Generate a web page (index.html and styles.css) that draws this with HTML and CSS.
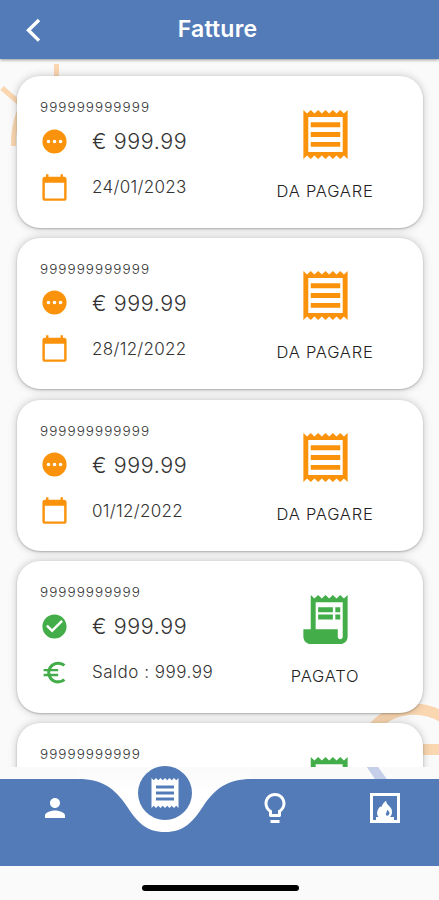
FILE: index.html
```
<!DOCTYPE html>
<html lang="it">
<head>
<meta charset="utf-8">
<title>Fatture</title>
<link rel="stylesheet" href="styles.css">
</head>
<body>
<svg class="defs" width="0" height="0" aria-hidden="true">
  <symbol id="receipt-outline" viewBox="0 0 24 24"><path d="M19.5 3.5L18 2l-1.5 1.5L15 2l-1.5 1.5L12 2l-1.5 1.5L9 2 7.5 3.5 6 2 4.5 3.5 3 2v20l1.5-1.5L6 22l1.5-1.5L9 22l1.5-1.5L12 22l1.5-1.5L15 22l1.5-1.5L18 22l1.5-1.5L21 22V2l-1.5 1.5zM19 19.09H5V4.91h14v14.18zM6 15h12v2H6zm0-4h12v2H6zm0-4h12v2H6z"/></symbol>
  <symbol id="receipt-long" viewBox="0 0 24 24"><path d="M19.5 3.5L18 2l-1.5 1.5L15 2l-1.5 1.5L12 2l-1.5 1.5L9 2 7.5 3.5 6 2v14H3v3c0 1.66 1.34 3 3 3h12c1.66 0 3-1.34 3-3V2l-1.5 1.5zM19 19c0 .55-.45 1-1 1s-1-.45-1-1v-3H8V5h11v14zM9 7h6v2H9zM16 7h2v2h-2zM9 10h6v2H9zM16 10h2v2h-2z"/></symbol>
  <symbol id="pending" viewBox="0 0 24 24"><path fill-rule="evenodd" d="M12 2a10 10 0 1 0 0 20 10 10 0 0 0 0-20zM7 13.5a1.5 1.5 0 1 1 0-3 1.5 1.5 0 0 1 0 3zm5 0a1.5 1.5 0 1 1 0-3 1.5 1.5 0 0 1 0 3zm5 0a1.5 1.5 0 1 1 0-3 1.5 1.5 0 0 1 0 3z"/></symbol>
  <symbol id="calendar" viewBox="0 0 24 24"><path d="M20 3h-1V1h-2v2H7V1H5v2H4c-1.1 0-2 .9-2 2v16c0 1.1.9 2 2 2h16c1.1 0 2-.9 2-2V5c0-1.1-.9-2-2-2zm0 18H4V8h16v13z"/></symbol>
  <symbol id="check" viewBox="0 0 24 24"><path d="M12 2C6.48 2 2 6.48 2 12s4.48 10 10 10 10-4.48 10-10S17.52 2 12 2zm-2 15l-5-5 1.41-1.41L10 14.17l7.59-7.59L19 8l-9 9z"/></symbol>
  <symbol id="euro" viewBox="0 0 24 24"><path d="M15 18.5c-2.51 0-4.68-1.42-5.76-3.5H15v-2H8.58c-.05-.33-.08-.66-.08-1s.03-.67.08-1H15V9H9.24C10.32 6.92 12.5 5.5 15 5.5c1.61 0 3.09.59 4.23 1.57L21 5.3C19.41 3.87 17.3 3 15 3c-3.92 0-7.24 2.51-8.48 6H3v2h3.06c-.04.33-.06.66-.06 1s.02.67.06 1H3v2h3.52c1.24 3.49 4.56 6 8.48 6 2.31 0 4.41-.87 6-2.3l-1.78-1.77c-1.13.98-2.6 1.57-4.22 1.57z"/></symbol>
</svg>

<div class="screen">
  <svg class="backdrop" viewBox="0 0 439 900" aria-hidden="true">
    <g fill="none" stroke="#fad7b0" stroke-width="5">
      <path d="M56.500 64V90M2 88L24 107M19 112Q13 128 13.500 146"/>
      <path stroke-width="11" d="M374 727A54 54 0 0 1 454 727M410 749.500H439"/>
    </g>
    <path fill="#c6cfea" d="M362 760H373L389 782H377z"/>
  </svg>

  <header class="bar">
    <svg class="back" viewBox="0 0 16 26"><path d="M14 3L3.500 13.300L14 23.600" fill="none" stroke="#fff" stroke-width="3.400"/></svg>
    <h1>Fatture</h1>
  </header>

  <main class="list">
    <article class="card due">
      <div class="info"><p class="code">999999999999</p>
        <p class="row"><svg><use href="#pending"/></svg><span class="amount">€ 999.99</span></p>
        <p class="row"><svg><use href="#calendar"/></svg><span class="detail">24/01/2023</span></p></div>
      <div class="status"><svg><use href="#receipt-outline"/></svg><span class="label">DA PAGARE</span></div>
    </article>
    <article class="card due">
      <div class="info"><p class="code">999999999999</p>
        <p class="row"><svg><use href="#pending"/></svg><span class="amount">€ 999.99</span></p>
        <p class="row"><svg><use href="#calendar"/></svg><span class="detail">28/12/2022</span></p></div>
      <div class="status"><svg><use href="#receipt-outline"/></svg><span class="label">DA PAGARE</span></div>
    </article>
    <article class="card due">
      <div class="info"><p class="code">999999999999</p>
        <p class="row"><svg><use href="#pending"/></svg><span class="amount">€ 999.99</span></p>
        <p class="row"><svg><use href="#calendar"/></svg><span class="detail">01/12/2022</span></p></div>
      <div class="status"><svg><use href="#receipt-outline"/></svg><span class="label">DA PAGARE</span></div>
    </article>
    <article class="card paid">
      <div class="info"><p class="code">99999999999</p>
        <p class="row"><svg><use href="#check"/></svg><span class="amount">€ 999.99</span></p>
        <p class="row"><svg><use href="#euro"/></svg><span class="detail saldo">Saldo : 999.99</span></p></div>
      <div class="status"><svg><use href="#receipt-long"/></svg><span class="label">PAGATO</span></div>
    </article>
    <article class="card paid">
      <div class="info"><p class="code">99999999999</p></div>
      <div class="status"><svg><use href="#receipt-long"/></svg></div>
    </article>
  </main>

  <nav class="tabs">
    <svg class="shape" viewBox="0 0 439 99" aria-hidden="true">
      <linearGradient id="fade" x2="0" y2="1"><stop offset="0" stop-color="#fafafa"/><stop offset=".4" stop-color="#fff"/></linearGradient>
      <path fill="url(#fade)" d="M78 0H252V66H78z"/>
      <path fill="#527bb8" d="M0 12H78C103 12 115 22 126 38C137 55 146 65 165 65C184 65 193 55 204 38C215 22 227 12 252 12H439V99H0z"/>
    </svg>
    <a class="tab"><svg class="person" viewBox="0 0 24 24"><path d="M12 12c2.210 0 4-1.790 4-4s-1.790-4-4-4-4 1.790-4 4 1.790 4 4 4zm0 2c-2.670 0-8 1.340-8 4v2h16v-2c0-2.660-5.330-4-8-4z"/></svg></a>
    <a class="tab active"><span class="bubble"><svg viewBox="0 0 24 24"><path d="M18 17H6v-2h12v2zm0-4H6v-2h12v2zm0-4H6V7h12v2zM3 22l1.500-1.500L6 22l1.500-1.500L9 22l1.500-1.500L12 22l1.500-1.500L15 22l1.500-1.500L18 22l1.500-1.500L21 22V2l-1.500 1.500L18 2l-1.500 1.500L15 2l-1.500 1.500L12 2l-1.500 1.500L9 2 7.500 3.500 6 2 4.500 3.500 3 2v20z"/></svg></span></a>
    <a class="tab"><svg viewBox="0 0 24 24"><path d="M9 20h6v2H9zM12 2C8.100 2 5 5.100 5 9c0 2.400 1.200 4.500 3 5.700V17c0 .5.400 1 1 1h6c.6 0 1-.5 1-1v-2.300c1.800-1.300 3-3.400 3-5.700 0-3.900-3.100-7-7-7zm2.900 11.100l-.9.6V16h-4v-2.300l-.9-.6C7.800 12.200 7 10.600 7 9c0-2.800 2.200-5 5-5s5 2.200 5 5c0 1.600-.8 3.200-2.100 4.100z"/></svg></a>
    <a class="tab"><svg viewBox="0 0 24 24"><path fill-rule="evenodd" d="M2 2H22V22H2zM4 4V20H6V18H7.700C6.300 16.500 6.400 13.500 8.500 11.300C9.100 10.600 9.500 11 9.600 11.400C10.300 9.600 11.500 8 12.800 7.200C12.600 10.200 16.700 10.800 16.700 14.500C16.700 16 16.200 17.200 15.300 18H18V20H20V4zM13.300 13.200C13.600 14.800 12.300 15.400 12.600 16.700C13.200 17.600 14.900 17 15 15.400C15 14.400 14.200 14 13.300 13.200z"/></svg></a>
  </nav>
  <footer class="home"><span></span></footer>
</div>
</body>
</html>
```
FILE: styles.css
```
* { box-sizing: border-box; margin: 0; padding: 0; }
body { background: #fafafa; font-family: Inter, Roboto, sans-serif; }
.defs { position: absolute; }
.screen { position: relative; width: 439px; height: 900px; overflow: hidden; display: flex; flex-direction: column; }
.backdrop { position: absolute; inset: 0; width: 439px; height: 900px; }

.bar {
  position: relative; z-index: 2; flex: none; height: 59px; padding-bottom: 2px;
  display: grid; grid-template-columns: 60px 1fr 60px; align-items: center;
  background: #527bb8; box-shadow: 0 1px 3px rgba(0, 0, 0, .4);
}
.back { width: 16px; height: 26px; margin: 2px 0 0 25px; }
.bar h1 { color: #fff; font-size: 23px; font-weight: 600; line-height: 28px; letter-spacing: .2px; text-align: center; margin-left: -4px; }

.list {
  position: relative; flex: none; height: 708px; overflow: hidden;
  display: flex; flex-direction: column; gap: 10.25px;
  padding: 17px 16px 0 17px;
}
.card {
  flex: none; height: 151.500px; display: flex;
  background: #fff; border-radius: 23px;
  box-shadow: 0 1px 2px rgba(0, 0, 0, .22), 0 0 8px rgba(0, 0, 0, .22);
}
.due { --tint: #fa930b; }
.paid { --tint: #42ad49; }
.card svg { fill: var(--tint); display: block; }
.info { width: 210px; padding: 22px 0 0 23px; color: #333; }
.code { font-size: 13.500px; line-height: 18px; font-weight: 300; letter-spacing: 1.050px; }
.row { display: flex; align-items: center; height: 46px; }
.code + .row { margin-top: 2px; }
.row svg { width: 29px; height: 29px; margin-right: 23px; }
.row span { white-space: nowrap; }
.amount { font-size: 21.500px; font-weight: 300; letter-spacing: .6px; }
.detail { font-size: 17px; font-weight: 300; letter-spacing: .3px; }
.saldo { letter-spacing: .5px; }
.status { width: 196px; padding-top: 28.500px; display: flex; flex-direction: column; align-items: center; }
.status svg { width: 59px; height: 59px; }
.label { margin-top: 17px; font-size: 16.500px; line-height: 20px; font-weight: 300; letter-spacing: .75px; color: #222; }

.tabs { position: relative; flex: none; height: 99px; display: grid; grid-template-columns: repeat(4, 1fr); }
.shape { position: absolute; inset: 0; width: 439px; height: 99px; }
.tab { position: relative; display: flex; justify-content: center; padding: 23px 0 0 1px; }
.tab svg { width: 36px; height: 36px; fill: #fff; }
.tab .person { width: 30px; height: 30px; margin-top: 3px; }
.tab.active { padding-top: 0; }
.bubble { display: flex; align-items: center; justify-content: center; width: 54px; height: 54px; margin-top: -1px; border-radius: 50%; background: #527bb8; }
.bubble svg { width: 36px; height: 36px; }

.home { flex: 1; display: flex; justify-content: center; padding: 19px 0 0 2px; }
.home span { width: 157px; height: 6px; border-radius: 3px; background: #000; }
```
